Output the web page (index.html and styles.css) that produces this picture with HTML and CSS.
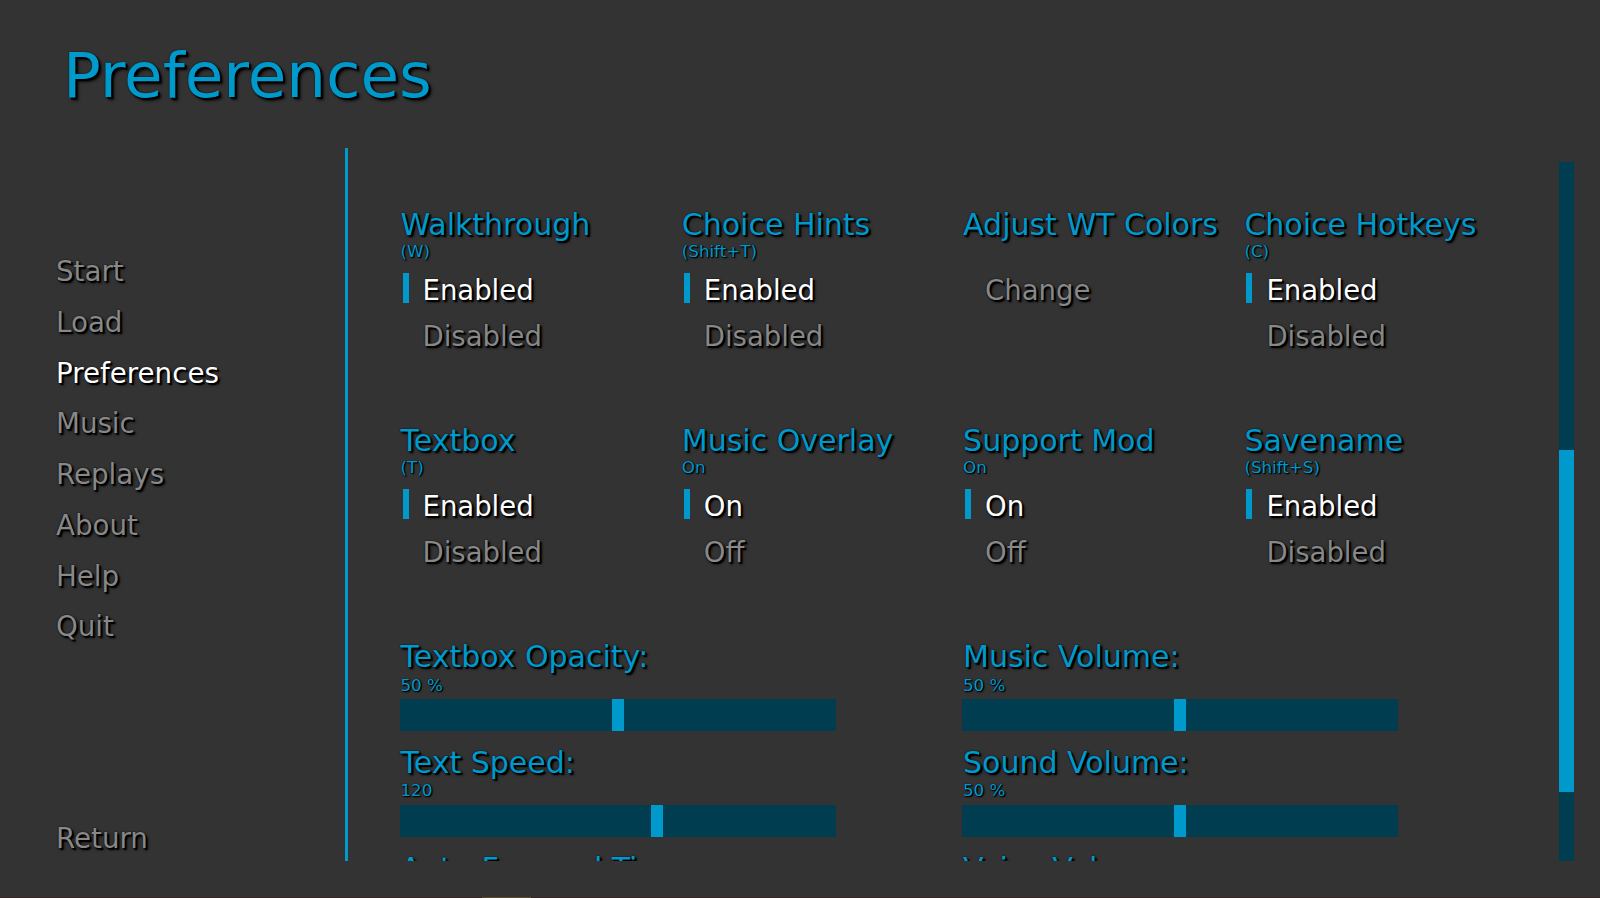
FILE: index.html
```html
<!DOCTYPE html>
<html lang="en">
<head>
<meta charset="utf-8">
<title>Preferences</title>
<link rel="stylesheet" href="styles.css">
</head>
<body>
<div class="screen">
  <h1 class="title">Preferences</h1>
  <div class="main">
    <nav class="nav">
      <div class="nav-item">Start</div>
      <div class="nav-item">Load</div>
      <div class="nav-item selected">Preferences</div>
      <div class="nav-item">Music</div>
      <div class="nav-item">Replays</div>
      <div class="nav-item">About</div>
      <div class="nav-item">Help</div>
      <div class="nav-item">Quit</div>
      <div class="nav-item nav-return">Return</div>
    </nav>
    <div class="divider"></div>
    <div class="viewport">
      <div class="pref-grid">
        <div class="pref">
          <div class="label">Walkthrough</div>
          <div class="sub">(W)</div>
          <div class="options">
            <div class="opt selected">Enabled</div>
            <div class="opt">Disabled</div>
          </div>
        </div>
        <div class="pref">
          <div class="label">Choice Hints</div>
          <div class="sub">(Shift+T)</div>
          <div class="options">
            <div class="opt selected">Enabled</div>
            <div class="opt">Disabled</div>
          </div>
        </div>
        <div class="pref">
          <div class="label">Adjust WT Colors</div>
          <div class="sub"></div>
          <div class="options">
            <div class="opt">Change</div>
          </div>
        </div>
        <div class="pref">
          <div class="label">Choice Hotkeys</div>
          <div class="sub">(C)</div>
          <div class="options">
            <div class="opt selected">Enabled</div>
            <div class="opt">Disabled</div>
          </div>
        </div>
        <div class="pref">
          <div class="label">Textbox</div>
          <div class="sub">(T)</div>
          <div class="options">
            <div class="opt selected">Enabled</div>
            <div class="opt">Disabled</div>
          </div>
        </div>
        <div class="pref">
          <div class="label">Music Overlay</div>
          <div class="sub">On</div>
          <div class="options">
            <div class="opt selected">On</div>
            <div class="opt">Off</div>
          </div>
        </div>
        <div class="pref">
          <div class="label">Support Mod</div>
          <div class="sub">On</div>
          <div class="options">
            <div class="opt selected">On</div>
            <div class="opt">Off</div>
          </div>
        </div>
        <div class="pref">
          <div class="label">Savename</div>
          <div class="sub">(Shift+S)</div>
          <div class="options">
            <div class="opt selected">Enabled</div>
            <div class="opt">Disabled</div>
          </div>
        </div>
      </div>
      <div class="slider-grid">
        <div class="slider-col">
          <div class="slider">
            <div class="label">Textbox Opacity:</div>
            <div class="value">50 %</div>
            <div class="bar"><div class="bar-thumb" style="--v:0.5"></div></div>
          </div>
          <div class="slider">
            <div class="label">Text Speed:</div>
            <div class="value">120</div>
            <div class="bar"><div class="bar-thumb" style="--v:0.592"></div></div>
          </div>
          <div class="slider">
            <div class="label">Auto-Forward Time:</div>
            <div class="value">50 %</div>
            <div class="bar"><div class="bar-thumb" style="--v:0.5"></div></div>
          </div>
        </div>
        <div class="slider-col">
          <div class="slider">
            <div class="label">Music Volume:</div>
            <div class="value">50 %</div>
            <div class="bar"><div class="bar-thumb" style="--v:0.5"></div></div>
          </div>
          <div class="slider">
            <div class="label">Sound Volume:</div>
            <div class="value">50 %</div>
            <div class="bar"><div class="bar-thumb" style="--v:0.5"></div></div>
          </div>
          <div class="slider">
            <div class="label">Voice Volume:</div>
            <div class="value">50 %</div>
            <div class="bar"><div class="bar-thumb" style="--v:0.5"></div></div>
          </div>
        </div>
      </div>
    </div>
    <div class="scrollbar"><div class="scroll-thumb"></div></div>
  </div>
</div>
<div class="bottom-strip"></div>
</body>
</html>
```
FILE: styles.css
```css
* { box-sizing: border-box; }
html, body { margin: 0; padding: 0; }
body {
  width: 1600px;
  height: 898px;
  overflow: hidden;
  background: #333333;
  font-family: "DejaVu Sans", "Liberation Sans", sans-serif;
}
.screen {
  height: 897px;
  padding-top: 38px;
}
.title {
  margin: 0 0 0 63px;
  font-size: 62.7px;
  line-height: 75px;
  font-weight: normal;
  color: #0099cc;
  white-space: nowrap;
  text-shadow: 0 0 1.5px #000, 2px 2px 1px #000, 3px 3px 3px rgba(0,0,0,0.75);
}
.main {
  display: flex;
  height: 713px;
  margin-top: 35px;
}
.nav {
  width: 345px;
  flex: none;
  padding: 107.4px 0 5.2px 56px;
  display: flex;
  flex-direction: column;
  gap: 16.7px;
}
.nav-item {
  font-size: 27.7px;
  line-height: 34px;
  color: #888888;
  white-space: nowrap;
  text-shadow: 0 0 1.5px #000, 2px 2px 1px #000, 2px 2px 3px rgba(0,0,0,0.75);
}
.nav-item.selected { color: #ffffff; }
.nav-return { margin-top: auto; }
.divider {
  width: 3px;
  flex: none;
  background: #0099cc;
}
.viewport {
  width: 1211px;
  flex: none;
  overflow: hidden;
  padding: 60px 0 0 52.5px;
}
.pref-grid {
  display: grid;
  grid-template-columns: repeat(4, 281.3px);
  row-gap: 74.7px;
}
.pref {
  display: flex;
  flex-direction: column;
}
.label {
  font-size: 30px;
  line-height: 34px;
  color: #0099cc;
  white-space: nowrap;
  text-shadow: 0 0 1.5px #000, 2px 2px 1px #000, 2px 2px 3px rgba(0,0,0,0.75);
}
.sub, .value {
  font-size: 16.7px;
  line-height: 18px;
  height: 18px;
  color: #0099cc;
  white-space: nowrap;
  text-shadow: 0 0 1px #000, 1px 1px 1px #000, 1px 1px 2px rgba(0,0,0,0.7);
}
.options {
  margin-top: 12.6px;
  display: flex;
  flex-direction: column;
  gap: 16.7px;
}
.opt {
  font-size: 27.5px;
  line-height: 25px;
  height: 30px;
  padding-top: 5px;
  padding-left: 14px;
  margin-left: 2px;
  border-left: 6px solid transparent;
  color: #888888;
  white-space: nowrap;
  text-shadow: 0 0 1.5px #000, 2px 2px 1px #000, 2px 2px 3px rgba(0,0,0,0.75);
}
.opt.selected {
  border-left-color: #0099cc;
  color: #ffffff;
}
.slider-grid {
  margin-top: 74.7px;
  margin-left: -1px;
  display: grid;
  grid-template-columns: repeat(2, 562.5px);
}
.slider-col {
  display: flex;
  flex-direction: column;
}
.slider {
  display: flex;
  flex-direction: column;
  margin-bottom: 14.6px;
}
.slider .label { margin-left: 1px; }
.value { margin-top: 1.6px; margin-left: 1px; }
.bar {
  margin-top: 5.6px;
  width: 436px;
  height: 32px;
  background: #003d51;
  position: relative;
}
.bar-thumb {
  position: absolute;
  top: 0;
  bottom: 0;
  width: 12px;
  left: calc(424px * var(--v));
  background: #0099cc;
}
.scrollbar {
  width: 15px;
  flex: none;
  height: 699px;
  margin-top: 13.7px;
  background: #003d51;
}
.scroll-thumb {
  margin-top: 288.3px;
  height: 342px;
  background: #0099cc;
}
.bottom-strip {
  height: 1px;
  background: linear-gradient(to right, #3a2626 0, #3a2626 482px, #5c4a2a 482px, #5c4a2a 531px, #3a2626 531px);
}
```
